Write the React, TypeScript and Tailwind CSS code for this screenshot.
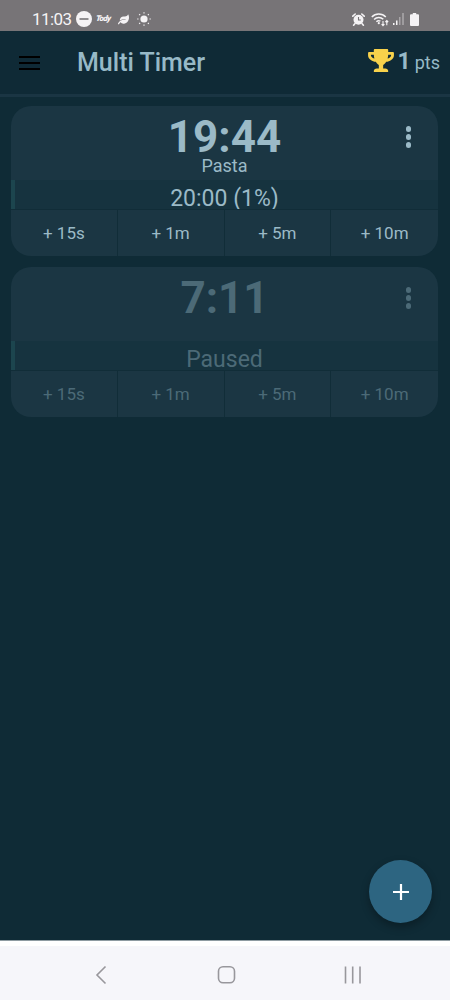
import { FaLeaf, FaTrophy } from "react-icons/fa";

const increments = ["+ 15s", "+ 1m", "+ 5m", "+ 10m"];

const timers = [
    { id: 1, time: "19:44", name: "Pasta", status: "20:00 (1%)", paused: false },
    { id: 2, time: "7:11", name: "", status: "Paused", paused: true }
];

type Timer = (typeof timers)[number];

function StatusBar() {
    return (
        <div className="flex h-[31px] items-center bg-[#777477] pl-8 pr-[31px] pt-[7px] text-[#f5f3f5]">
            <span className="w-[43px] text-[17px] leading-6 tracking-[-0.55px]">11:03</span>
            {/* Do not disturb */}
            <svg className="ml-px h-4 w-4" viewBox="0 0 16 16">
                <circle cx="8" cy="8" r="8" fill="currentColor" />
                <path d="M3.5 8h9" stroke="#777477" strokeWidth="1.6" />
            </svg>
            <span className="ml-1 w-[15px] -skew-x-6 text-[8px] font-black italic leading-4 tracking-[-0.6px]">Tody</span>
            <FaLeaf className="ml-[7px] h-[11px] w-[11px]" />
            {/* Brightness */}
            <svg className="ml-2 h-[14px] w-[14px]" viewBox="0 0 14 14">
                <circle cx="7" cy="7" r="3.6" fill="currentColor" />
                <path
                    d="M7 .2v1.3M7 12.5v1.3M.2 7h1.3M12.5 7h1.3M2.2 2.2l.9.9M10.9 10.9l.9.9M2.2 11.8l.9-.9M10.9 3.1l.9-.9"
                    stroke="currentColor"
                    strokeWidth="1.2"
                />
            </svg>
            <div className="ml-auto flex items-center">
                {/* Alarm */}
                <svg className="h-[13px] w-[13px]" viewBox="0 0 13 13">
                    <circle cx="6.5" cy="6.7" r="5" fill="currentColor" />
                    <path d="M.8 3.2 3.2 1M12.2 3.2 9.8 1M2.8 10.8l-1.2 1.4M10.2 10.8l1.2 1.4" stroke="currentColor" strokeWidth="1.6" strokeLinecap="round" />
                    <path d="M6.5 4v3h2.3" fill="none" stroke="#777477" strokeWidth="1.1" />
                </svg>
                {/* Wifi with traffic arrows */}
                <svg className="ml-[6px] h-[15px] w-[18px]" viewBox="0 0 18 15" fill="none" stroke="currentColor">
                    <path d="M.8 5a9.7 9.7 0 0 1 14 0M3.1 7.5a6.6 6.6 0 0 1 9.2-.2M5.4 9.7a3.4 3.4 0 0 1 4-.5" strokeWidth="1.5" />
                    <circle cx="7.8" cy="11.2" r="1.1" fill="currentColor" stroke="none" />
                    <path d="M12 9v4.5M10.6 12.2l1.4 1.4 1.4-1.4M15.8 13.2V8.6M14.4 10l1.4-1.4L17.2 10" strokeWidth="1.1" />
                </svg>
                <svg className="ml-1 h-3 w-[11px]" viewBox="0 0 11 12" fill="currentColor">
                    <path d="M0 10h1.5v2H0zM3 7.5h1.5V12H3z" />
                    <path d="M6 4h1.5v8H6zM9.2 0h1.6v12H9.2z" opacity=".4" />
                </svg>
                <svg className="ml-[6px] h-[13px] w-[9px]" viewBox="0 0 9 13" fill="currentColor">
                    <path d="M2.8 0h3.4v1.3H8a1 1 0 0 1 1 1V12a1 1 0 0 1-1 1H1a1 1 0 0 1-1-1V2.3a1 1 0 0 1 1-1h1.8z" />
                </svg>
            </div>
        </div>
    );
}

function Header() {
    return (
        <header className="flex h-[66px] items-center border-b-[3px] border-[#1a3543] bg-[#0f2a36] pl-[19px] pr-[10px] text-[#97b9c7]">
            <div className="flex w-[21px] flex-col gap-1">
                <div className="h-[2px] bg-black"></div>
                <div className="h-[2px] bg-black"></div>
                <div className="h-[2px] bg-black"></div>
            </div>
            <h1 className="ml-[37px] text-[25px] font-medium leading-8">Multi Timer</h1>
            <div className="ml-auto flex items-baseline">
                <FaTrophy className="h-[23px] w-[26px] translate-y-[3px] text-[#f8d24b]" />
                <span className="ml-1 text-[23px] font-bold leading-8">1</span>
                <span className="ml-1 text-[18px] leading-8">pts</span>
            </div>
        </header>
    );
}

function TimerCard({ timer }: { timer: Timer }) {
    const textColor = timer.paused ? "text-[#4c6a77]" : "text-[#9bbac7]";

    return (
        <section className={`h-[150px] overflow-hidden rounded-[20px] bg-[#1b3643] ${textColor}`}>
            <div className="relative flex h-[74px] flex-col items-center">
                <div className="mt-[5px] h-[45px] text-[44px] font-bold leading-[52px]">{timer.time}</div>
                <div className="text-[18px] leading-[20px]">{timer.name}</div>
                {/* Overflow menu */}
                <div className="absolute right-[27px] top-5 flex flex-col gap-[2.5px]">
                    <div className="h-[5.5px] w-[5.5px] rounded-full bg-current"></div>
                    <div className="h-[5.5px] w-[5.5px] rounded-full bg-current"></div>
                    <div className="h-[5.5px] w-[5.5px] rounded-full bg-current"></div>
                </div>
            </div>
            <div className="flex h-[29px] overflow-hidden border-l-4 border-[#1c454e] bg-[#16333f]">
                <div className="w-full pr-1 text-center text-[23px] leading-[38px]">{timer.status}</div>
            </div>
            <div className="grid h-[47px] grid-cols-4 border-t border-[#112d38]">
                {increments.map((label) => (
                    <button
                        key={label}
                        className="border-r border-[#112d38] pt-px text-[17px] last:border-r-0"
                    >
                        {label}
                    </button>
                ))}
            </div>
        </section>
    );
}

function NavigationBar() {
    return (
        <nav className="h-[60px] border-t border-[#8e9ba1] bg-[#f6f6fa]">
            <div className="h-[5px] bg-white"></div>
            <svg className="block h-[54px] w-full" viewBox="0 0 450 54" fill="none" stroke="#98979c" strokeWidth="1.6">
                <path d="M105.5 20.5 97 29l8.500 8.500" />
                <rect x="218.500" y="20.800" width="16" height="16" rx="4.500" />
                <path d="M345.500 20.500v17M352.700 20.500v17M360 20.500v17" />
            </svg>
        </nav>
    );
}

export default function App() {
    return (
        <div className="flex h-[1000px] w-[450px] flex-col overflow-hidden bg-[#0f2b36] font-[Roboto,sans-serif]">
            <StatusBar />
            <Header />
            <main className="flex flex-1 flex-col gap-[11px] pl-[11px] pr-3 pt-[9px]">
                {timers.map((timer) => (
                    <TimerCard key={timer.id} timer={timer} />
                ))}
                {/* Add timer button */}
                <button className="mb-[17px] mr-[6px] mt-auto flex h-[63px] w-[63px] items-center justify-center self-end rounded-full bg-[#2d6581] shadow-[0_4px_8px_rgba(0,0,0,0.3)]">
                    <svg className="h-4 w-4" viewBox="0 0 16 16" stroke="white" strokeWidth="2.2">
                        <path d="M8 0v16M0 8h16" />
                    </svg>
                </button>
            </main>
            <NavigationBar />
        </div>
    );
}
